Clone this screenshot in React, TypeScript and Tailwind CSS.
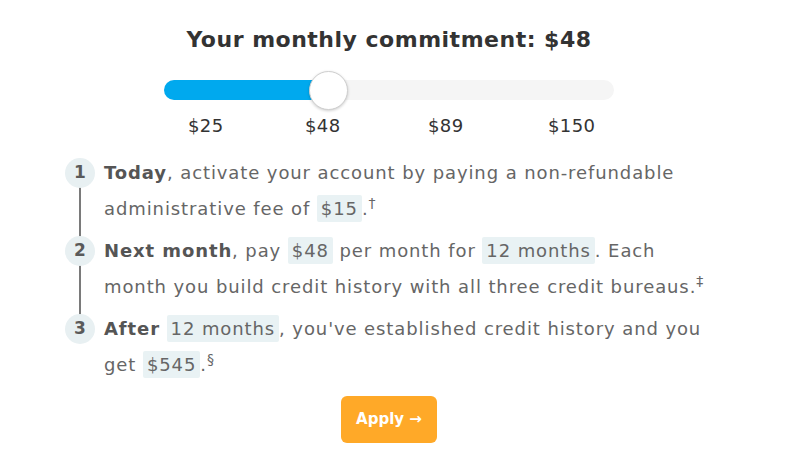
const font = { fontFamily: '"DejaVu Sans", "Noto Sans", sans-serif' }

function Chip({ children }: { children: React.ReactNode }) {
  return <span className="rounded-[2px] bg-[#e9f2f4] px-[4px] py-[3px]">{children}</span>
}

function Step({ n, last, children }: { n: number; last?: boolean; children: React.ReactNode }) {
  return (
    <div className="relative flex">
      <div className="relative w-[39px] shrink-0">
        <div className="relative z-10 mt-[3px] flex h-[30px] w-[30px] items-center justify-center rounded-full bg-[#e8f0f2] text-[17px] font-bold text-[#5a5a5a]">
          {n}
        </div>
        {!last && <div className="absolute left-[14px] top-[30px] h-[58px] w-[2px] bg-[#7a7a7a]" />}
      </div>
      <p className="whitespace-nowrap text-[18px] leading-[36px] tracking-[0.9px] text-[#666]">{children}</p>
    </div>
  )
}

export default function App() {
  return (
    <div className="h-[468px] w-[786px] bg-white" style={font}>
      <h1 className="ml-[-8px] pt-[26px] text-center text-[22px] font-bold leading-[28px] tracking-[0.5px] text-[#333]">
        Your monthly commitment: $48
      </h1>

      <div className="ml-[164px] mt-[26px] w-[450px]">
        <div className="relative h-[20px] rounded-full bg-[#f5f5f5]">
          <div className="h-full w-[164px] rounded-full bg-[#00a9ee]" />
          <div className="absolute left-[145px] top-[-9px] h-[39px] w-[39px] rounded-full border border-[#cfcfcf] bg-white shadow-[0_1px_3px_rgba(0,0,0,0.2)]" />
        </div>
        <div className="relative mt-[12px] h-[24px] text-[18px] tracking-[0.4px] text-[#333]">
          <span className="absolute left-[24px]">$25</span>
          <span className="absolute left-[141px]">$48</span>
          <span className="absolute left-[264px]">$89</span>
          <span className="absolute left-[384px]">$150</span>
        </div>
      </div>

      <div className="ml-[65px] mt-[19px] flex w-[660px] flex-col gap-[6px]">
        <Step n={1}>
          <b className="text-[#555]">Today</b>, activate your account by paying a non-refundable
          <br />
          administrative fee of <Chip>$15</Chip>.<sup className="text-[14px]">†</sup>
        </Step>
        <Step n={2}>
          <b className="text-[#555]">Next month</b>, pay <Chip>$48</Chip> per month for <Chip>12 months</Chip>. Each
          <br />
          month you build credit history with all three credit bureaus.<sup className="text-[14px]">‡</sup>
        </Step>
        <Step n={3} last>
          <b className="text-[#555]">After</b> <Chip>12 months</Chip>, you've established credit history and you
          <br />
          get <Chip>$545</Chip>.<sup className="text-[14px]">§</sup>
        </Step>
      </div>

      <div className="ml-[341px] mt-[13px]">
        <button className="h-[47px] w-[96px] rounded-[6px] bg-[#ffa928] text-[15px] font-bold text-white">
          Apply →
        </button>
      </div>
    </div>
  )
}
